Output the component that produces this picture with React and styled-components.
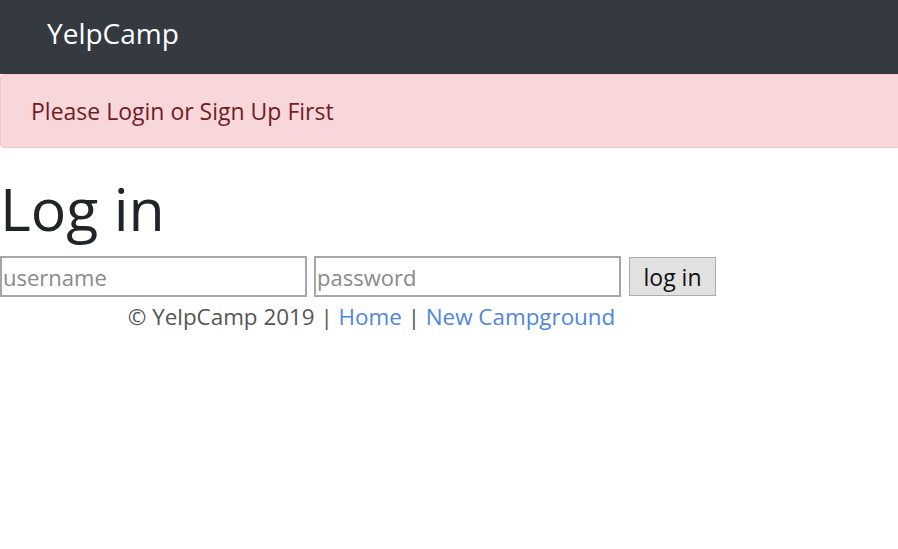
import React from "react";
import styled, { createGlobalStyle } from "styled-components";

const GlobalStyle = createGlobalStyle`
  html, body {
    margin: 0;
    padding: 0;
    background: #fff;
  }
  body {
    font-family: "Open Sans", "Noto Sans", sans-serif;
    color: #212529;
    overflow: hidden;
  }
`;

const Navbar = styled.nav`
  height: 74px;
  background: #343a40;
  display: flex;
  align-items: center;
  padding: 0 0 0 47px;
`;

const Brand = styled.a`
  color: #fff;
  font-size: 28px;
  text-decoration: none;
  margin-top: -8px;
`;

const Alert = styled.div`
  height: 74px;
  box-sizing: border-box;
  margin-right: -6px;
  background: #f8d7da;
  border: 1px solid #f5c6cb;
  border-radius: 4px;
  color: #721c24;
  font-size: 23px;
  display: flex;
  align-items: center;
  padding-left: 30px;
`;

const Title = styled.h1`
  margin: 25px 0 0 0;
  font-size: 59px;
  font-weight: 400;
  line-height: 70px;
`;

const LoginForm = styled.form`
  display: flex;
  align-items: center;
  gap: 7px;
  margin-top: 13px;
`;

const Field = styled.input`
  width: 307px;
  height: 41px;
  box-sizing: border-box;
  border: 2px solid #a6a6a6;
  border-radius: 0;
  padding: 0 1px;
  font-family: inherit;
  font-size: 22px;
  color: #212529;
  outline: none;

  &::placeholder {
    color: #8a8a8a;
  }
`;

const SubmitButton = styled.button`
  margin-left: 1px;
  height: 39px;
  width: 87px;
  padding: 0;
  background: #e1e1e1;
  border: 1px solid #adadad;
  font-family: inherit;
  font-size: 23px;
  color: #111;
`;

const Footer = styled.footer`
  width: 743px;
  text-align: center;
  font-size: 22.4px;
  color: #555;
  margin-top: 3px;
  line-height: 34px;
`;

const FooterLink = styled.a`
  color: #4f86e0;
  text-decoration: none;
`;

export default function App() {
  return (
    <>
      <GlobalStyle />
      <Navbar>
        <Brand href="#">YelpCamp</Brand>
      </Navbar>
      <Alert>Please Login or Sign Up First</Alert>
      <Title>Log in</Title>
      <LoginForm onSubmit={(e) => e.preventDefault()}>
        <Field type="text" placeholder="username" />
        <Field type="password" placeholder="password" />
        <SubmitButton>log in</SubmitButton>
      </LoginForm>
      <Footer>
        © YelpCamp 2019 | <FooterLink href="#">Home</FooterLink> |{" "}
        <FooterLink href="#">New Campground</FooterLink>
      </Footer>
    </>
  );
}
